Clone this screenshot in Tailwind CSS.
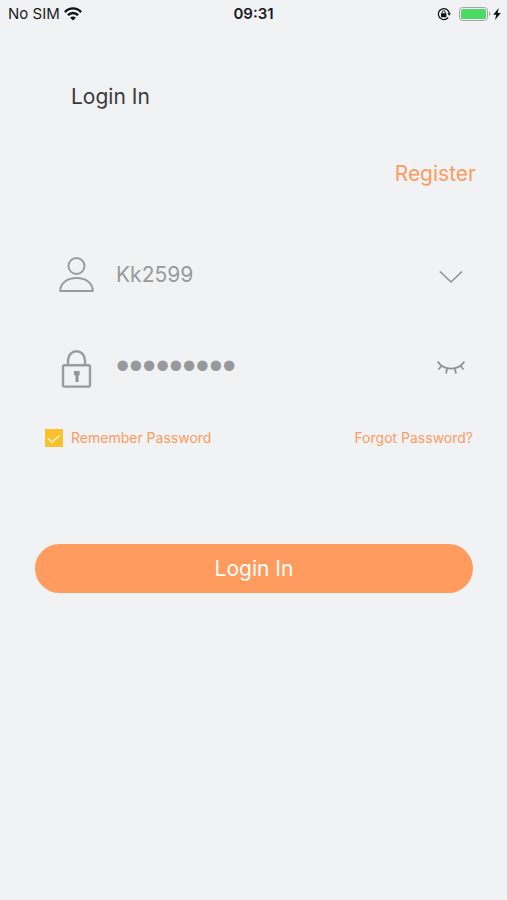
<!DOCTYPE html>
<html lang="en">
<head>
<meta charset="utf-8">
<meta name="viewport" content="width=device-width, initial-scale=1">
<title>Login In</title>
<script src="https://cdn.jsdelivr.net/npm/@tailwindcss/browser@4"></script>
</head>
<body class="min-h-screen bg-[#f0f2f4] font-['Inter','Liberation_Sans',sans-serif] text-[#3a3a3f]">
<header class="grid h-7 grid-cols-3 items-center px-2 text-[15px] leading-5 text-[#1b1b1d]">
  <div class="flex items-center gap-1">
    <span>No SIM</span>
    <svg class="h-3.5 w-[18px]" viewBox="0 0 16 12" fill="none" stroke="#111" stroke-width="2.2" role="img" aria-label="Wi-Fi">
      <path d="M.8 4.3C5-.1 11-.1 15.200 4.300"/><path d="M3.500 7.100c2.600-2.600 6.400-2.600 9 0"/><path d="M8 11.800 5.500 9.300c1.500-1.400 3.500-1.400 5 0z" fill="#111" stroke="none"/>
    </svg>
  </div>
  <time class="text-center font-semibold">09:31</time>
  <div class="-mr-0.5 flex items-center justify-end gap-1">
    <svg class="h-3.5 w-3.5" viewBox="0 0 14 14" fill="none" stroke="#111" role="img" aria-label="Rotation locked">
      <path d="M11.200 10.500A5.500 5.500 0 1 1 12.300 6.500" stroke-width="1.300"/><path d="M10.300 6.300h3.700l-1.800 2.500z" fill="#111" stroke="none"/>
      <rect x="4" y="6.200" width="5.400" height="4" rx=".5" fill="#111" stroke="none"/><path d="M5.200 6.500V5.300a1.500 1.500 0 0 1 3 0v1.200" stroke-width="1"/>
    </svg>
    <div class="flex items-center gap-0.5 pl-1">
      <svg class="h-3.5 w-8" viewBox="0 0 32 14" role="img" aria-label="Battery full">
        <rect x=".5" y=".5" width="28" height="13" rx="3" fill="none" stroke="#a3a5a8"/><rect x="2" y="2" width="25" height="10" rx="1.500" fill="#4cd964"/><path d="M30 4.800c1.800.5 1.800 3.900 0 4.400z" fill="#a3a5a8"/>
      </svg>
      <svg class="h-3 w-2" viewBox="0 0 8 12" fill="#111" role="img" aria-label="Charging"><path d="M5.700 0 .2 6.800h3L2 12l5.800-7H4.700z"/></svg>
    </div>
  </div>
</header>
<main class="flex flex-col">
  <h1 class="mt-[53px] pl-[71px] text-[21px] leading-8">Login In</h1>
  <a href="#register" class="mt-[45px] mr-[31px] self-end text-[21px] leading-8 text-[#ff9b5e]">Register</a>
  <form class="flex flex-col pl-[35px] pr-[34px]">
    <div class="mt-[65px] flex h-10 items-center pl-6 pr-2">
      <label for="user" class="shrink-0" aria-label="User name">
        <svg class="h-9 w-9" viewBox="0 0 36 36" fill="none" stroke="#999b9e" stroke-width="2"><circle cx="17.500" cy="9" r="8"/><path d="M1.200 34C1.200 26 8.500 21 17.500 21s16.300 5 16.300 13z" stroke-linejoin="round"/></svg>
      </label>
      <input id="user" type="text" value="Kk2599" autocomplete="username" class="ml-[21px] h-8 min-w-0 flex-1 bg-transparent text-[21px] leading-8 text-[#98999c] outline-none">
      <button type="button" aria-label="Show accounts" class="flex w-7 justify-center pt-1">
        <svg class="h-4 w-6" viewBox="0 0 24 16" fill="none" stroke="#8e9093" stroke-width="1.600"><path d="M1 2.500 12 13 23 2.500"/></svg>
      </button>
    </div>
    <div class="mt-[53px] flex h-10 items-center pl-6 pr-2">
      <label for="password" class="shrink-0" aria-label="Password">
        <svg class="h-10 w-9" viewBox="0 0 36 40" fill="none" stroke="#999b9e" stroke-width="2.400"><rect x="4" y="17.200" width="27" height="21.400" rx="1.500"/><path d="M9 17v-4.500a8.500 9.300 0 0 1 17 0V17"/><path d="M15 23h5.600v4.200h-1.100V34h-3v-6.800H15z" fill="#929497" stroke="none"/></svg>
      </label>
      <input id="password" type="password" value="123456789" autocomplete="current-password" class="ml-[21px] h-10 min-w-0 flex-1 bg-transparent pb-1 font-['Liberation_Sans',sans-serif] text-[38px] leading-9 text-[#98999c] outline-none">
      <button type="button" aria-label="Show password" class="flex w-7 justify-center">
        <svg class="h-4 w-7" viewBox="0 0 28 16" fill="none" stroke="#909295" stroke-width="1.800"><path d="M.6 1.500C7 11 21 11 27.400 1.500M4.800 5.500 1.500 9.500M10.200 8.500 9 13.500M17.800 8.500 19 13.500M23.200 5.500 26.500 9.500"/></svg>
      </button>
    </div>
    <div class="mt-10 flex items-center justify-between pl-[10px] text-[14px] leading-5 text-[#ff9b5e]">
      <label class="flex items-center gap-2">
        <span class="grid h-[18px] w-[18px]">
          <input type="checkbox" checked class="peer col-start-1 row-start-1 h-[18px] w-[18px] appearance-none bg-white checked:bg-[#fbc02d]">
          <svg class="pointer-events-none invisible col-start-1 row-start-1 h-[18px] w-[18px] peer-checked:visible" viewBox="0 0 18 18" fill="none" stroke="#fff3d0" stroke-width="1.500"><path d="m3 9.500 4 3.800 7.500-6.800"/></svg>
        </span>
        <span>Remember Password</span>
      </label>
      <a href="#forgot">Forgot Password?</a>
    </div>
    <button type="submit" class="mt-24 h-[49px] rounded-full bg-[#ff9b5e] text-[21px] leading-8 text-white">Login In</button>
  </form>
</main>
</body>
</html>
